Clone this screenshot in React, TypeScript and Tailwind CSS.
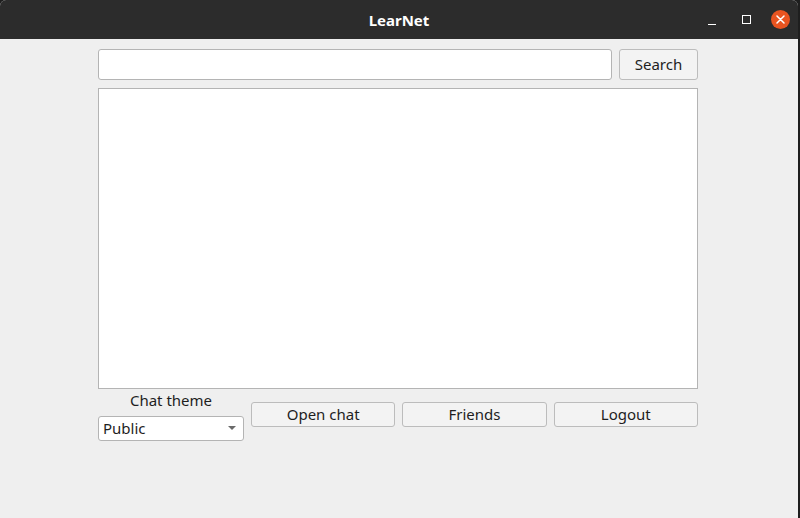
import React from "react";

export default function App() {
  const font = { fontFamily: '"Noto Sans", "Open Sans", sans-serif' };
  return (
    <div className="w-[800px] h-[518px] flex bg-[#1e1e1e] overflow-hidden" style={font}>
      <div className="w-[798px] h-[518px] flex flex-col bg-[#efefef] rounded-tl-[6px] rounded-tr-[6px] overflow-hidden">
        <div className="h-[39px] bg-[#2c2c2c] relative flex items-center justify-center shrink-0 pt-[2px]">
          <span className="text-white text-[15px] font-bold">LearNet</span>
          <div className="absolute right-[1px] top-0 h-[39px] flex items-center">
            <div className="w-[34px] flex justify-center pt-[4px]">
              <div className="w-[8px] h-[1.5px] bg-white mt-[6px]" />
            </div>
            <div className="w-[34px] flex justify-center">
              <div className="w-[9px] h-[9px] border-[1.5px] border-white" />
            </div>
            <div className="w-[34px] flex justify-center">
              <div className="w-[19px] h-[19px] rounded-full bg-[#e95420] flex items-center justify-center">
                <svg width="9" height="9" viewBox="0 0 9 9">
                  <path d="M1 1 L8 8 M8 1 L1 8" stroke="white" strokeWidth="1.5" strokeLinecap="round" />
                </svg>
              </div>
            </div>
          </div>
        </div>
        <div className="flex flex-col pl-[98px] pr-[100px] pt-[10px]">
          <div className="flex gap-[7px] h-[31px]">
            <div className="flex-1 bg-white border border-[#b4b4b4] rounded-[3px]" />
            <button className="w-[79px] bg-[#f3f3f3] border border-[#bcbcbc] rounded-[3px] text-[15px] text-[#1e1e1e]">Search</button>
          </div>
          <div className="mt-[8px] h-[301px] bg-white border border-[#b4b4b4]" />
          <div className="flex gap-[7px] mt-[1px]">
            <div className="w-[146px] flex flex-col items-center">
              <span className="text-[15px] text-[#1e1e1e] leading-[20px]">Chat theme</span>
              <div className="mt-[6px] w-[146px] h-[25px] bg-white border border-[#b4b4b4] rounded-[3px] flex items-center justify-between px-[4px]">
                <span className="text-[15px] text-[#1e1e1e]">Public</span>
                <svg width="8" height="5" viewBox="0 0 8 5" className="mr-[3px]">
                  <path d="M0 0 L8 0 L4 4 Z" fill="#6a6a6a" />
                </svg>
              </div>
            </div>
            <div className="flex-1 flex gap-[7px] mt-[12px] h-[25px]">
              <button className="flex-1 bg-[#f3f3f3] border border-[#bcbcbc] rounded-[3px] text-[15px] text-[#1e1e1e]">Open chat</button>
              <button className="flex-1 bg-[#f3f3f3] border border-[#bcbcbc] rounded-[3px] text-[15px] text-[#1e1e1e]">Friends</button>
              <button className="flex-1 bg-[#f3f3f3] border border-[#bcbcbc] rounded-[3px] text-[15px] text-[#1e1e1e]">Logout</button>
            </div>
          </div>
        </div>
      </div>
    </div>
  );
}
